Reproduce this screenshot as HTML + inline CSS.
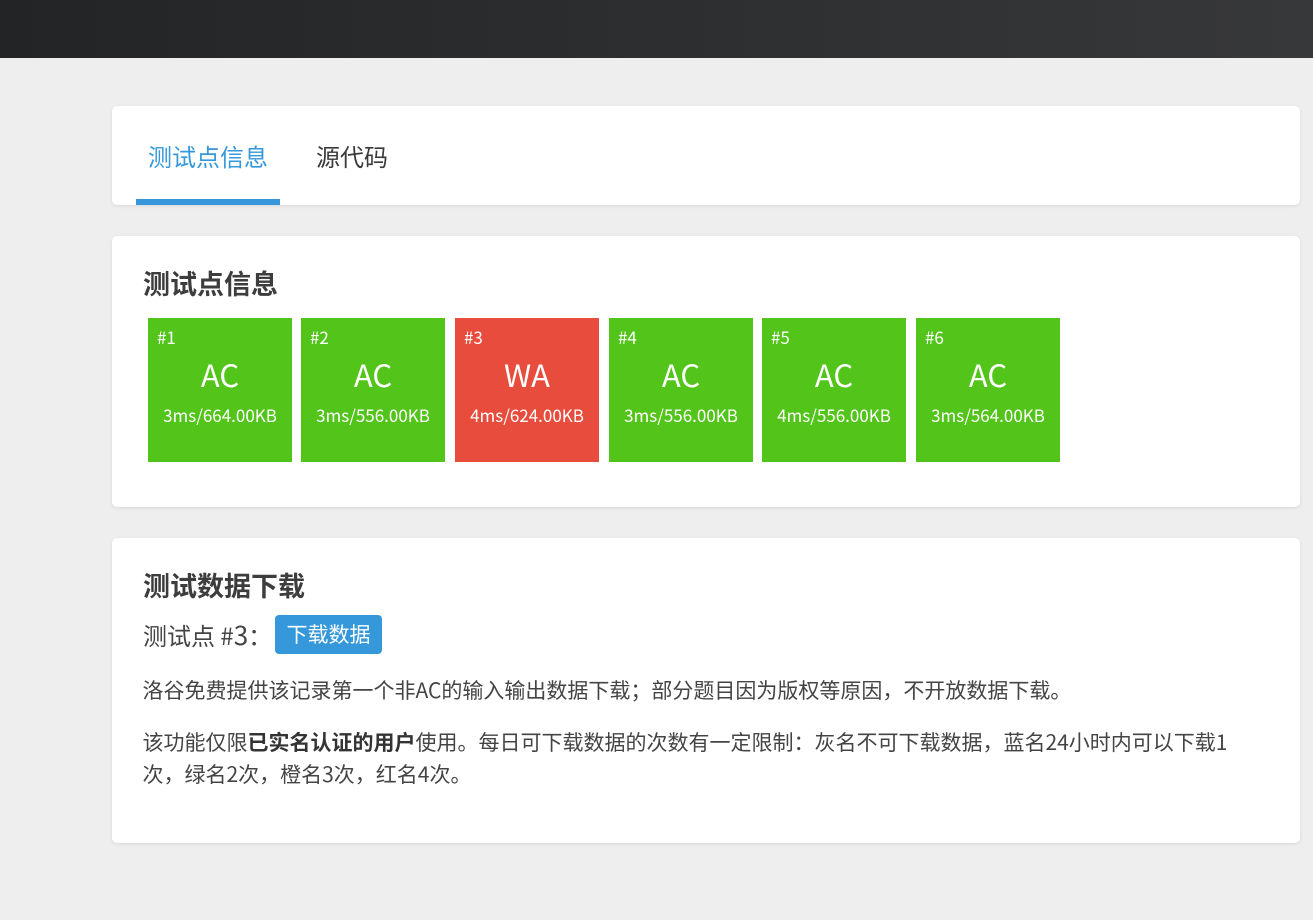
<!DOCTYPE html>
<html lang="zh-CN"><head><meta charset="utf-8"><title>测试点信息</title>
<style>
html,body{margin:0;padding:0;width:1313px;height:920px;overflow:hidden;background:#eee}
body{font-family:"Noto Sans CJK SC","Liberation Sans",sans-serif;color:rgba(0,0,0,.75);position:relative}
.a{position:absolute;white-space:nowrap}
.nav{left:0;top:0;width:1313px;height:58px;background:linear-gradient(90deg,#222426,#37383a)}
.card{position:absolute;left:112px;width:1188px;background:#fff;border-radius:5px;box-shadow:0 1px 3px rgba(26,26,26,.1)}
.tab{font-size:24px;line-height:36px;top:138px}
.h{font-size:27px;line-height:36px;font-weight:700;left:143px;color:#3d3d3d}
.p{font-size:21px;line-height:32px;left:142.5px;color:#444}
.t{position:absolute;top:318px;width:144px;height:144px;background:#52c41a;color:#fff;text-align:center}
.t.r{background:#e74c3c}
.t i{position:absolute;left:9px;top:8px;font-style:normal;font-size:17px;line-height:22px}
.t b{position:absolute;left:0;right:0;top:35px;font-weight:400;font-size:31px;line-height:42px}
.t span{position:absolute;left:0;right:0;top:85px;font-size:17px;line-height:24px}
.btn{left:275px;top:615px;width:107px;height:39px;background:#3498db;color:#fff;border-radius:4px;text-align:center;font-size:21px;line-height:38px}
</style></head><body>
<div class="a nav"></div>
<div class="card" style="top:106px;height:99px"></div>
<div class="a tab" style="left:148px;color:#3498db">测试点信息</div>
<div class="a tab" style="left:316px;color:#3a3a3a">源代码</div>
<div class="a" style="left:136px;top:199px;width:144px;height:6px;background:#3498db"></div>
<div class="card" style="top:236px;height:271px"></div>
<div class="a h" style="top:265px">测试点信息</div>
<div class="t" style="left:148px"><i>#1</i><b>AC</b><span>3ms/664.00KB</span></div>
<div class="t" style="left:301px"><i>#2</i><b>AC</b><span>3ms/556.00KB</span></div>
<div class="t r" style="left:455px"><i>#3</i><b>WA</b><span>4ms/624.00KB</span></div>
<div class="t" style="left:609px"><i>#4</i><b>AC</b><span>3ms/556.00KB</span></div>
<div class="t" style="left:762px"><i>#5</i><b>AC</b><span>4ms/556.00KB</span></div>
<div class="t" style="left:916px"><i>#6</i><b>AC</b><span>3ms/564.00KB</span></div>
<div class="card" style="top:538px;height:305px"></div>
<div class="a h" style="top:567px">测试数据下载</div>
<div class="a" style="left:143px;top:617px;font-size:24px;line-height:36px;color:#444">测试点 #<span style="font-size:26px;line-height:20px">3</span>：</div>
<div class="a btn">下载数据</div>
<div class="a p" style="top:674px">洛谷免费提供该记录第一个非AC的输入输出数据下载；部分题目因为版权等原因，不开放数据下载。</div>
<div class="a p" style="top:726px">该功能仅限<b style="color:#333">已实名认证的用户</b>使用。每日可下载数据的次数有一定限制：灰名不可下载数据，蓝名24小时内可以下载1</div>
<div class="a p" style="top:758px">次，绿名2次，橙名3次，红名4次。</div>
</body></html>
